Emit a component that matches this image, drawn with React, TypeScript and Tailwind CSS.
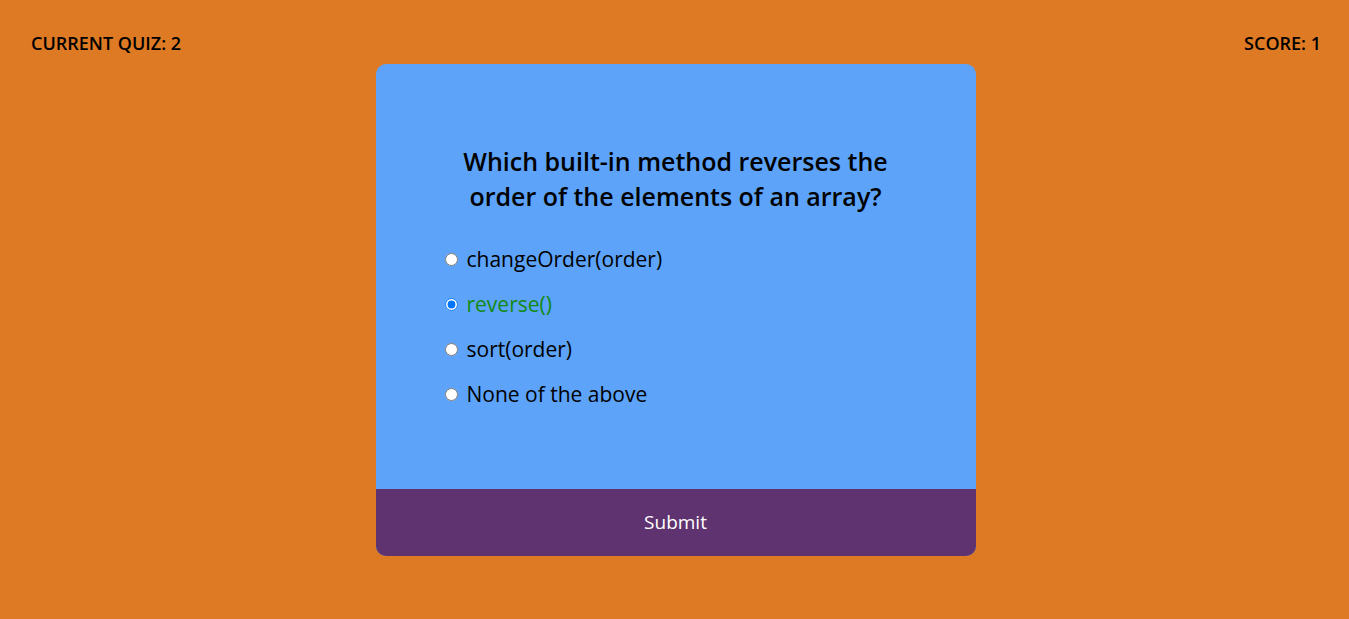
import React from "react";

const options = ["changeOrder(order)", "reverse()", "sort(order)", "None of the above"];

export default function App() {
  return (
    <div
      className="min-h-screen w-full bg-[#df7a24] text-black"
      style={{ fontFamily: '"Open Sans", "Noto Sans", sans-serif' }}
    >
      <div className="flex justify-between pl-[31px] pr-[28px] pt-[33px] text-[18px] leading-[20px] font-[550]">
        <span>CURRENT QUIZ: 2</span>
        <span>SCORE: 1</span>
      </div>
      <div className="flex justify-center mt-[11px] pl-[2px]">
        <div className="w-[600px] rounded-[10px] overflow-hidden bg-[#5ca3f9]">
          <div className="pt-[80px] pb-[72px]">
            <h2 className="text-center text-[25px] leading-[35px] font-[550]">
              Which built-in method reverses the
              <br />
              order of the elements of an array?
            </h2>
            <ul className="mt-[23px] pl-[69px]">
              {options.map((o, i) => (
                <li key={o} className="flex items-center h-[45px] gap-[9px]">
                  <input
                    type="radio"
                    name="q"
                    checked={i === 1}
                    readOnly
                    className="m-0 w-[13px] h-[13px]"
                  />
                  <label className={`text-[21px] font-normal ${i === 1 ? "text-[#138a13]" : ""}`}>{o}</label>
                </li>
              ))}
            </ul>
          </div>
          <button className="block w-full h-[67px] bg-[#5f336f] text-white text-[19px] font-medium">
            Submit
          </button>
        </div>
      </div>
    </div>
  );
}
